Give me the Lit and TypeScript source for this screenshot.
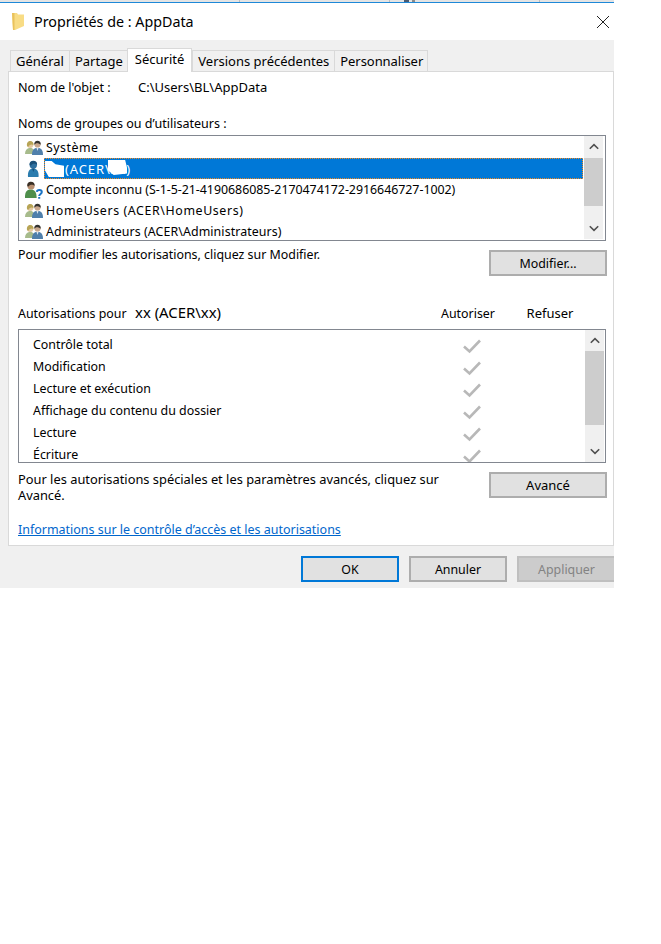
import { LitElement, html, css, svg } from "lit";
import { customElement } from "lit/decorators.js";

const groupIcon = svg`<svg class="ic" width="18" height="16" viewBox="0 0 18 16">
<path d="M0 14c0-3.500 1.500-5.500 4-6l2.500 0c2 .6 3 2.500 3 6z" fill="#a7bb8c"/>
<circle cx="5.200" cy="5" r="3" fill="#e4c9a2"/><path d="M2 6c-.5-3.500 1.200-5 3.300-5s3.700 1.500 3.200 4.500C7.500 3.800 4 4.500 3.200 7z" fill="#b7a455"/>
<path d="M7 15c0-4.500 1.500-6.500 4-7h3c2.500.5 4 2.500 4 7z" fill="#4f7fab"/><path d="M11.500 8h2l-1 3z" fill="#dfe8f0"/>
<circle cx="12.500" cy="4.500" r="3.100" fill="#c8a78d"/><path d="M9.300 4.800C9 2 10.500.8 12.500.8s3.600 1.200 3.200 4c-1-1.400-4-2-4.900-1.300z" fill="#33322f"/></svg>`;
const userIcon = svg`<svg class="ic" width="18" height="18" viewBox="0 0 18 18">
<path d="M3 17c-.5-5 1-7.500 4-8.500h2.500c3 1 4.500 3.500 4 8.500z" fill="#2b7cae"/>
<circle cx="8.300" cy="5" r="3.700" fill="#2f709f"/><path d="M4.500 5C4.300 2 6 .8 8.300.8s4.100 1.400 3.800 4.200c-1.200-1.500-5-2-6 .8z" fill="#1a4f78"/>
<path d="M7 8.500h2.700L8.300 12z" fill="#15527f"/></svg>`;
const unknownIcon = svg`<svg class="ic" width="18" height="18" viewBox="0 0 18 18">
<path d="M0 17c-.3-5 1.200-7.500 4.300-8.500h3c3 1 4.500 3.500 4.300 8.500z" fill="#4f8f4c"/>
<circle cx="6" cy="5" r="3.600" fill="#b88f70"/><path d="M2.300 5.200C2 2 3.800.8 6 .8S9.900 2.200 9.600 5c-1.200-1.500-5-1.800-6 .6z" fill="#3a3026"/>
<path d="M11.800 10.800c.4-2.300 5-2.300 5 .3 0 1.900-2.600 1.900-2.600 4M14.200 16v1.800" fill="none" stroke="#1c74c4" stroke-width="2"/></svg>`;
const up = svg`<svg width="10" height="7" viewBox="0 0 10 7"><path d="M.8 5.800 5 1.600 9.200 5.800" fill="none" stroke="#505050" stroke-width="1.600"/></svg>`;
const down = svg`<svg width="10" height="7" viewBox="0 0 10 7"><path d="M.8 1.200 5 5.400 9.200 1.200" fill="none" stroke="#505050" stroke-width="1.600"/></svg>`;
const check = svg`<svg width="18" height="15" viewBox="0 0 18 15"><path d="M1 7.500 6.500 12.500 17 1.500" fill="none" stroke="#b8b8b8" stroke-width="2.600"/></svg>`;
const folder = svg`<svg width="12" height="17" viewBox="0 0 12 17"><path d="M0 0h5l1 1.500h6V13l-9 4H1z" fill="#f8dc85"/><path d="M0 0h2.500v17H1z" fill="#e9c25c"/></svg>`;
const closeX = svg`<svg width="12" height="12" viewBox="0 0 12 12"><path d="M0 0 12 12M12 0 0 12" stroke="#222" stroke-width="1"/></svg>`;

const users: [unknown, string][] = [
  [groupIcon, "Système"],
  [userIcon, ""],
  [unknownIcon, "Compte inconnu (S-1-5-21-4190686085-2170474172-2916646727-1002)"],
  [groupIcon, "HomeUsers (ACER\\HomeUsers)"],
  [groupIcon, "Administrateurs (ACER\\Administrateurs)"],
];
const perms = ["Contrôle total", "Modification", "Lecture et exécution", "Affichage du contenu du dossier", "Lecture", "Écriture"];
const tabs = ["Général", "Partage", "Sécurité", "Versions précédentes", "Personnaliser"];

@customElement("app-root")
export class AppRoot extends LitElement {
  static styles = css`
    :host { display: block; width: 661px; height: 944px; background: #fff; font-family: "Noto Sans", sans-serif; font-size: 12.4px; color: #000; overflow: hidden; }
    .win { width: 614px; }
    .strip { height: 2px; display: flex; background: #e4e4e4; }
    .strip i { display: block; height: 2px; flex: none; }
    .s1 { width: 239px; border-right: 1px solid #bdbdbd; }
    .s2 { width: 149px; border-right: 1px solid #bdbdbd; }
    .s3 { width: 14px; }
    .s4 { width: 5px; background: #4a5a70; }
    .s5 { width: 3px; }
    .s6 { width: 3px; background: #8a8a8a; }
    .s7 { width: 124px; border-right: 1px solid #bdbdbd; }
    .blue { height: 1px; background: #1e88d8; }
    .title { height: 37px; display: flex; align-items: center; padding-left: 12px; font-size: 14.3px; }
    .title .t { margin-left: 10px; flex: 1; }
    .title .x { margin-right: 5px; display: flex; }
    .body { background: #f0f0f0; height: 548px; padding-top: 10px; box-sizing: border-box; }
    .tabs { display: flex; height: 21px; padding-left: 10px; align-items: flex-end; position: relative; z-index: 1; }
    .tab { height: 21px; box-sizing: border-box; border: 1px solid #d9d9d9; border-bottom: none; margin-right: -1px; padding: 0 5px; display: flex; align-items: center; font-size: 13px; }
    .tab:last-child { padding: 0 4px 0 5px; letter-spacing: -0.05px; }
    .tab.on { height: 24px; background: #fff; margin: 0 0 -1px -1px; padding: 0 7px 4px; z-index: 2; }
    .panel { margin-left: 8px; width: 606px; height: 475px; box-sizing: border-box; background: #fff; border: 1px solid #d9d9d9; padding: 0 6px 0 9px; display: flex; flex-direction: column; }
    .row { display: flex; }
    .obj { margin-top: 7px; height: 16px; align-items: center; }
    .obj span:first-child { width: 120px; font-size: 12.6px; }
    .obj span:last-child { font-size: 13px; }
    .lbl { margin-top: 20px; height: 16px; display: flex; align-items: center; font-size: 12.55px; }
    .list { border: 1px solid #828790; box-sizing: border-box; display: flex; background: #fff; width: 588px; }
    .l1 { height: 106px; margin-top: 4px; }
    .l2 { height: 134px; margin-top: 6px; }
    .items { flex: 1; min-width: 0; overflow: hidden; padding: 1px 1px 0 0; }
    .it { height: 21px; display: flex; align-items: center; padding-left: 6px; white-space: nowrap; }
    .it .ic { flex: none; margin-right: 1px; }
    .it .name { flex: 1; height: 21px; display: flex; align-items: center; box-sizing: border-box; padding-left: 2px; }
    .it:nth-child(1) .name { letter-spacing: 0.5px; }
    .it:nth-child(3) .name { letter-spacing: -0.03px; }
    .it:nth-child(4) .name { letter-spacing: 0.6px; }
    .it:nth-child(5) .name { letter-spacing: 0.08px; }
    .it.sel .name { background: #0078d7; color: #fff; border: 1px dotted #f08a24; position: relative; padding-left: 20px; font-size: 13px; letter-spacing: 0.9px; }
    .blot { position: absolute; background: #fff; }
    .b1 { left: 0; top: 2px; width: 19px; height: 16px; clip-path: polygon(0 0, 35% 0, 55% 20%, 100% 30%, 100% 100%, 20% 100%, 0 60%); }
    .b2 { left: 63px; top: 1px; width: 19px; height: 15px; clip-path: polygon(0 0, 90% 0, 100% 50%, 100% 90%, 30% 100%, 0 70%); }
    .sb { width: 19px; flex: none; background: #f0f0f0; display: flex; flex-direction: column; }
    .l1 .sb { margin: 0 2px 1px 0; }
    .l2 .sb { margin: 0 1px 0 0; }
    .arrow { height: 21px; flex: none; display: flex; align-items: center; justify-content: center; }
    .thumb { background: #cdcdcd; }
    .t1 { height: 48px; margin-top: 1px; }
    .t2 { height: 74px; }
    .track { flex: 1; }
    .btnrow { justify-content: space-between; }
    .btn { width: 118px; height: 26px; box-sizing: border-box; border: 2px solid #adadad; background: #e1e1e1; display: flex; align-items: center; justify-content: center; flex: none; }
    .mod { margin-top: 9px; }
    .mod span { margin-top: -4px; }
    .perm { height: 20px; margin-top: 27px; align-items: center; }
    .perm .a { width: 117px; }
    .perm .u { width: 300px; font-size: 14.9px; margin-top: -2px; }
    .perm .c1 { width: 66px; text-align: center; }
    .perm .c2 { margin-left: 16px; width: 66px; text-align: center; font-size: 13px; }
    .p { height: 22px; display: flex; align-items: center; padding-left: 14px; }
    .p .n { width: 430px; white-space: nowrap; }
    .p svg { flex: none; margin-top: 4px; }
    .items2 { flex: 1; overflow: hidden; height: 132px; padding-top: 3px; box-sizing: border-box; }
    .adv { margin-top: 9px; align-items: flex-start; }
    .adv p { margin: -1px 0 0; line-height: 16px; width: 440px; font-size: 12.85px; }
    .adv .btn { font-size: 13px; }
    a { margin-top: 19px; color: #0066cc; text-decoration: underline; display: block; line-height: 16px; font-size: 12.48px; }
    .foot { display: flex; padding: 10px 0 0 301px; gap: 10px; }
    .foot .btn { width: 98px; }
    .foot .ok { border-color: #0078d7; }
    .foot .dis { width: 97px; background: #ccc; border-color: #bfbfbf; color: #838383; border-right: none; }
  `;
  render() {
    return html`<div class="win">
      <div class="strip"><i class="s1"></i><i class="s2"></i><i class="s3"></i><i class="s4"></i><i class="s5"></i><i class="s6"></i><i class="s7"></i></div>
      <div class="blue"></div>
      <div class="title">${folder}<span class="t">Propriétés de : AppData</span><span class="x">${closeX}</span></div>
      <div class="body">
        <div class="tabs">${tabs.map((t, i) => html`<div class="tab ${i === 2 ? "on" : ""}">${t}</div>`)}</div>
        <div class="panel">
          <div class="row obj"><span>Nom de l'objet :</span><span>C:\\Users\\BL\\AppData</span></div>
          <div class="lbl">Noms de groupes ou d’utilisateurs :</div>
          <div class="list l1">
            <div class="items">
              ${users.map(([ic, n], i) => html`<div class="it ${i === 1 ? "sel" : ""}">${ic}<span class="name">${i === 1 ? html`<span>(ACER\\xx)</span><i class="blot b1"></i><i class="blot b2"></i>` : n}</span></div>`)}
            </div>
            <div class="sb"><div class="arrow">${up}</div><div class="thumb t1"></div><div class="track"></div><div class="arrow">${down}</div></div>
          </div>
          <div class="row btnrow mod"><span>Pour modifier les autorisations, cliquez sur Modifier.</span><div class="btn">Modifier...</div></div>
          <div class="row perm"><span class="a">Autorisations pour</span><span class="u">xx (ACER\\xx)</span><span class="c1">Autoriser</span><span class="c2">Refuser</span></div>
          <div class="list l2">
            <div class="items2">${perms.map((p) => html`<div class="p"><span class="n">${p}</span>${check}</div>`)}</div>
            <div class="sb"><div class="arrow">${up}</div><div class="thumb t2"></div><div class="track"></div><div class="arrow">${down}</div></div>
          </div>
          <div class="row btnrow adv"><p>Pour les autorisations spéciales et les paramètres avancés, cliquez sur Avancé.</p><div class="btn">Avancé</div></div>
          <a>Informations sur le contrôle d’accès et les autorisations</a>
        </div>
        <div class="foot"><div class="btn ok">OK</div><div class="btn">Annuler</div><div class="btn dis">Appliquer</div></div>
      </div>
    </div>`;
  }
}
